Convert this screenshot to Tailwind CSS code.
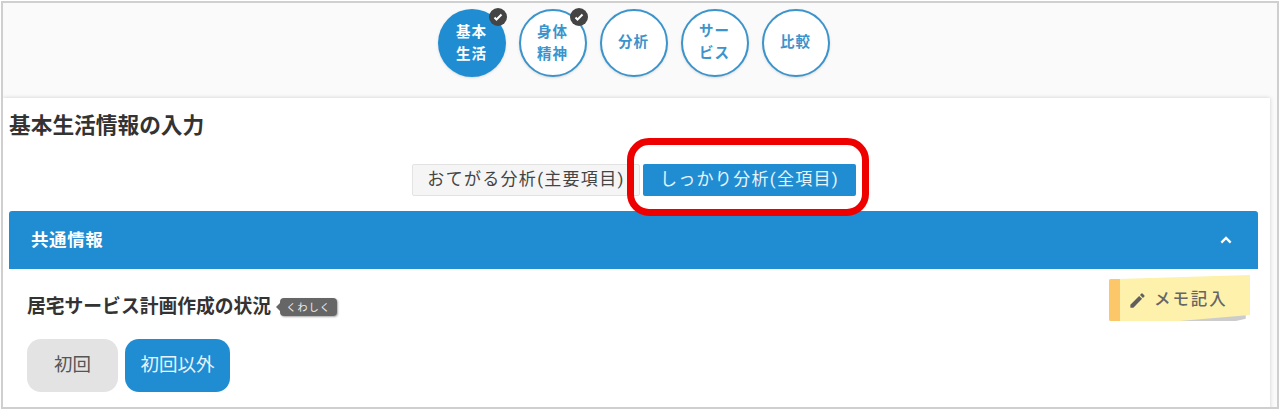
<!DOCTYPE html>
<html lang="ja">
<head>
  <meta charset="UTF-8" />
  <title>基本生活情報の入力</title>
  <script src="https://cdn.jsdelivr.net/npm/@tailwindcss/browser@4"></script>
</head>
<body class="bg-white">
  <div class="w-[1280px] h-[410px] overflow-hidden p-[1px] font-['Roboto','Noto_Sans_CJK_JP',sans-serif]">
    <div class="w-[1278px] h-[408px] border-2 border-[#cfcfcf] bg-[#fafafa] overflow-hidden">

      <!-- Steps -->
      <div class="h-[95px] flex justify-center pt-[6px] pr-[13px] gap-[13px] text-[14.5px] leading-[22px] font-bold tracking-[1px]">
        <div class="relative w-[68px] h-[68px] rounded-full bg-[#208dd3] text-white shadow-sm flex items-center justify-center text-center">
          <span class="pt-[2px]">基本<br>生活</span>
          <span class="absolute right-[-1px] top-[-1px] w-[18px] h-[18px] rounded-full bg-[#444444] flex items-center justify-center">
            <svg viewBox="0 0 24 24" class="w-[12px] h-[12px]" fill="none" stroke="#ffffff" stroke-width="4"><path d="M5 13l4 4 10-10"/></svg>
          </span>
        </div>
        <div class="relative w-[68px] h-[68px] rounded-full bg-white border-2 border-[#3b94cc] text-[#3b94cc] shadow-sm flex items-center justify-center text-center">
          <span class="pt-[2px]">身体<br>精神</span>
          <span class="absolute right-[-3px] top-[-3px] w-[18px] h-[18px] rounded-full bg-[#444444] flex items-center justify-center">
            <svg viewBox="0 0 24 24" class="w-[12px] h-[12px]" fill="none" stroke="#ffffff" stroke-width="4"><path d="M5 13l4 4 10-10"/></svg>
          </span>
        </div>
        <div class="w-[68px] h-[68px] rounded-full bg-white border-2 border-[#3b94cc] text-[#3b94cc] shadow-sm flex items-center justify-center text-center">分析</div>
        <div class="w-[68px] h-[68px] rounded-full bg-white border-2 border-[#3b94cc] text-[#3b94cc] shadow-sm flex items-center justify-center text-center"><span>サー<br>ビス</span></div>
        <div class="w-[68px] h-[68px] rounded-full bg-white border-2 border-[#3b94cc] text-[#3b94cc] shadow-sm flex items-center justify-center text-center">比較</div>
      </div>

      <!-- Card -->
      <div class="relative w-[1267px] h-[320px] bg-white shadow-[0_0_4px_rgba(0,0,0,0.18)] pl-[6px] pr-[12px]">
        <h1 class="pt-[15px] text-[21.7px] leading-[26px] font-bold text-[#333333] whitespace-nowrap">基本生活情報の入力</h1>

        <div class="mt-[24px] ml-[403px] h-[33px] flex items-center gap-[3px] text-[17px] tracking-[1.3px]">
          <div class="w-[228px] h-[32px] bg-[#f5f5f5] border border-[#e3e3e3] rounded-[2px] text-[#444444] flex items-center justify-center whitespace-nowrap">おてがる分析(主要項目)</div>
          <div class="w-[213px] h-[32px] bg-[#208dd3] rounded-[2px] text-[#e8f4fb] flex items-center justify-center whitespace-nowrap">しっかり分析(全項目)</div>
        </div>

        <!-- Highlight -->
        <div class="absolute left-[624px] top-[40px] w-[242px] h-[78px] border-[7px] border-[#ee0000] rounded-[22px]"></div>

        <!-- Common info panel -->
        <div class="mt-[15px] w-[1249px] h-[58px] bg-[#208dd3] rounded-t-[3px] pl-[22px] pr-[24px] flex items-center justify-between text-white">
          <span class="text-[17.5px] font-bold tracking-[0.6px]">共通情報</span>
          <svg viewBox="0 0 24 24" class="w-[16px] h-[16px]" fill="none" stroke="#ffffff" stroke-width="3.5"><path d="M5 16l7-7 7 7"/></svg>
        </div>

        <div class="relative w-[1249px] h-[139px] pl-[18px]">
          <div class="pt-[26px] flex items-center h-[50px]">
            <span class="text-[18.8px] font-bold text-[#333333] whitespace-nowrap">居宅サービス計画作成の状況</span>
            <span class="relative ml-[9px] h-[18px] w-[57px] rounded-[4px] bg-[#666666] text-[#eeeeee] text-[10px] tracking-[1.2px] flex items-center justify-center shadow-[1px_1px_2px_rgba(0,0,0,0.35)]">
              くわしく
              <span class="absolute left-[-4px] top-[5px] border-y-[4px] border-r-[4px] border-y-transparent border-r-[#666666]"></span>
            </span>
          </div>
          <div class="mt-[20px] flex gap-[7px] text-[18.5px]">
            <div class="w-[91px] h-[53px] rounded-[14px] bg-[#e3e3e3] text-[#555555] flex items-center justify-center">初回</div>
            <div class="w-[105px] h-[53px] rounded-[14px] bg-[#208dd3] text-[#e8f4fb] flex items-center justify-center">初回以外</div>
          </div>

          <!-- Memo note -->
          <div class="absolute left-[1100px] top-[6px] w-[141px] h-[47px]">
            <div class="absolute inset-0 bg-[#cccccc] [clip-path:polygon(45%_98%,97%_80%,97%_93%,90%_98%)]"></div>
            <div class="absolute inset-0 bg-[#fdf1ab] [clip-path:polygon(0_9%,100%_0,100%_85%,50%_98%,0_98%)] flex items-center pl-[19px] pt-[3px] gap-[7px] text-[16.5px] tracking-[1.9px] text-[#666666] font-medium">
              <svg viewBox="0 0 24 24" class="w-[19px] h-[19px] shrink-0" fill="#5f5f5f"><path d="M3 17.25V21h3.75L17.81 9.94l-3.75-3.75L3 17.25zM20.71 7.04a1 1 0 0 0 0-1.41l-2.34-2.34a1 1 0 0 0-1.41 0l-1.83 1.83 3.75 3.75 1.83-1.83z"/></svg>
              <span class="whitespace-nowrap">メモ記入</span>
            </div>
            <div class="absolute left-0 top-[4px] w-[11px] h-[42px] bg-[#fbc769] rounded-l-[2px]"></div>
          </div>
        </div>
      </div>
    </div>
  </div>
</body>
</html>
